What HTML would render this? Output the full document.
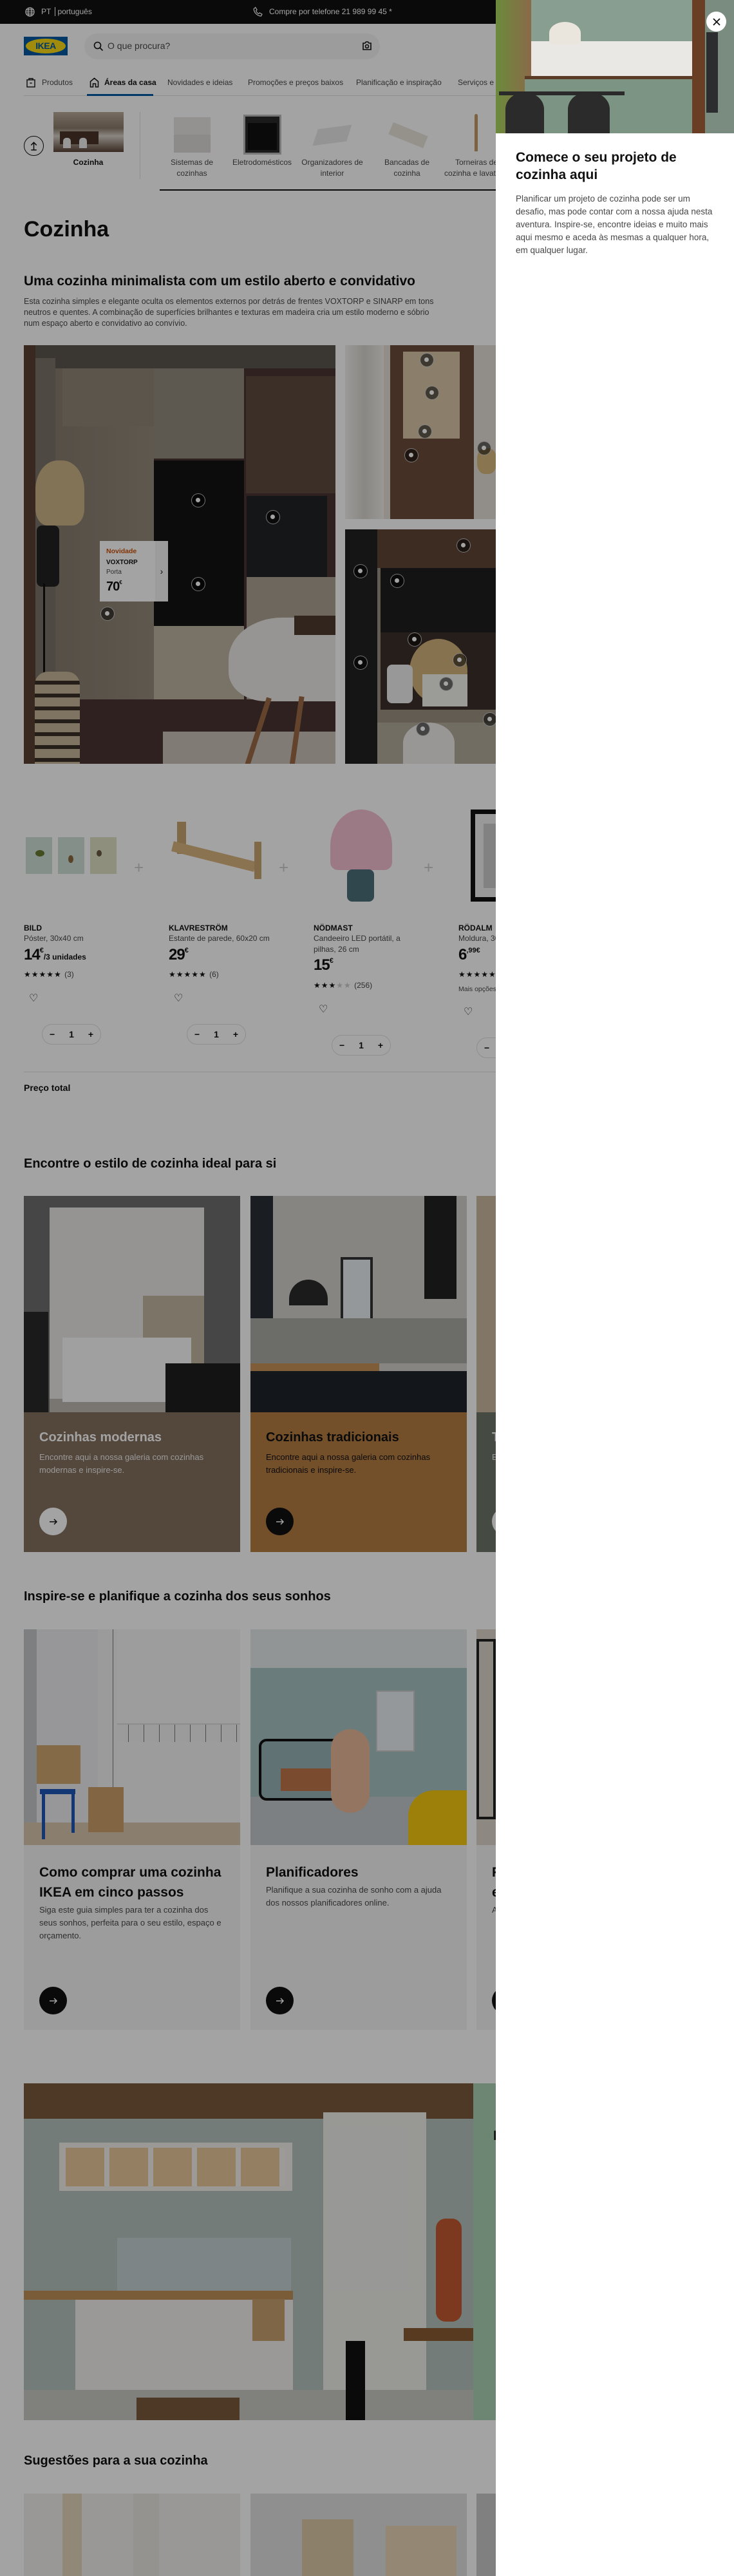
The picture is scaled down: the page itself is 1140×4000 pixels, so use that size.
<!DOCTYPE html>
<html><head><meta charset="utf-8">
<style>
*{margin:0;padding:0;box-sizing:border-box}
body{width:1140px;height:4000px;overflow:hidden;background:#fff;font-family:"Liberation Sans",sans-serif;color:#111;position:relative}
.a{position:absolute}
.nav{position:absolute;top:121px;font-size:12px;color:#484848;white-space:nowrap}
.cat{position:absolute;top:244px;width:110px;text-align:center;font-size:12px;line-height:17px;color:#484848}
.hs{position:absolute;width:22px;height:22px;margin:-11px 0 0 -11px;border-radius:50%;background:rgba(0,0,0,.55);border:1.5px solid rgba(255,255,255,.7)}
.hs:after{content:"";position:absolute;left:6px;top:6px;width:7px;height:7px;border-radius:50%;background:#fff}
.pn{position:absolute;font-size:12px;font-weight:bold;color:#111}
.pd{position:absolute;font-size:12px;color:#484848;line-height:17px;width:190px}
.pr{position:absolute;font-size:24px;font-weight:bold;letter-spacing:-1px}
.pr sup{font-size:11px;vertical-align:top;line-height:14px;letter-spacing:0}
.st{position:absolute;font-size:12px;color:#111;letter-spacing:1px}
.ht{position:absolute;font-size:16px}
.qty{position:absolute;width:92px;height:32px;border:1.5px solid #dfdfdf;border-radius:16px;font-size:14px;display:flex;justify-content:space-around;align-items:center;font-weight:bold}
.plus{position:absolute;font-size:26px;color:#ccc;top:1332px}
.h2{position:absolute;left:37px;font-size:20px;font-weight:bold}
.card{position:absolute;width:336px;overflow:hidden}
.btn{position:absolute;width:43px;height:43px;border-radius:50%;display:flex;align-items:center;justify-content:center}
</style></head><body>

<!-- top bar -->
<div class="a" style="left:0;top:0;width:1140px;height:37px;background:#111"></div>
<svg class="a" style="left:39px;top:11px" width="15" height="15" viewBox="0 0 16 16" fill="none" stroke="#fff" stroke-width="1.3"><circle cx="8" cy="8" r="7"/><ellipse cx="8" cy="8" rx="3" ry="7"/><path d="M1 8h14M2 4.5h12M2 11.5h12"/></svg>
<div class="a" style="left:64px;top:11px;font-size:12px;color:#fff">PT <span style="border-left:1px solid #fff;margin:0 3px"></span> português</div>
<svg class="a" style="left:393px;top:10px" width="15" height="17" viewBox="0 0 16 18" fill="none" stroke="#fff" stroke-width="1.3"><path d="M4 1.5l2.5 4-1.6 1.6c.8 2.2 2.4 4 4.4 5l1.6-1.6 4 2.4-1.6 3c-6 0-12-6-12-12z"/></svg>
<div class="a" style="left:418px;top:11px;font-size:12px;color:#fff">Compre por telefone 21 989 99 45 *</div>

<!-- header -->
<div class="a" style="left:37px;top:57px;width:68px;height:29px;background:#0058a3"><div class="a" style="left:3px;top:3px;width:62px;height:23px;border-radius:50%;background:#fbd914;text-align:center;font-weight:bold;font-size:14px;line-height:23px;color:#0058a3;letter-spacing:-.5px">IKEA</div></div>
<div class="a" style="left:131px;top:52px;width:459px;height:40px;border-radius:20px;background:#f5f5f5"></div>
<svg class="a" style="left:145px;top:64px" width="16" height="16" viewBox="0 0 16 16" fill="none" stroke="#111" stroke-width="1.6"><circle cx="6.5" cy="6.5" r="5"/><path d="M10 10l4.5 4.5"/></svg>
<div class="a" style="left:167px;top:63px;font-size:14px;color:#484848">O que procura?</div>
<svg class="a" style="left:562px;top:63px" width="16" height="16" viewBox="0 0 16 16" fill="none" stroke="#111" stroke-width="1.6"><path d="M2 4h3l1.5-2h3L11 4h3v10H2z"/><circle cx="8" cy="9" r="2.5"/></svg>

<svg class="a" style="left:41px;top:121px" width="14" height="15" viewBox="0 0 14 15" fill="none" stroke="#111" stroke-width="1.4"><rect x="1" y="3" width="12" height="11"/><path d="M4 3V1h6v2M5.5 8h3"/></svg>
<div class="nav" style="left:65px">Produtos</div>
<svg class="a" style="left:139px;top:120px" width="15" height="16" viewBox="0 0 15 16" fill="none" stroke="#111" stroke-width="1.5"><path d="M1.5 15V6.5L7.5 1.5l6 5V15h-4v-5h-4v5z"/></svg>
<div class="nav" style="left:162px;font-weight:bold;color:#111">Áreas da casa</div>
<div class="nav" style="left:260px">Novidades e ideias</div>
<div class="nav" style="left:385px">Promoções e preços baixos</div>
<div class="nav" style="left:553px">Planificação e inspiração</div>
<div class="nav" style="left:711px">Serviços e apoio</div>
<div class="a" style="left:37px;top:148px;width:1103px;height:1px;background:#dfdfdf"></div>
<div class="a" style="left:135px;top:146px;width:103px;height:3px;background:#0058a3"></div>

<!-- category row -->
<div class="a" style="left:37px;top:211px;width:31px;height:31px;border-radius:50%;border:1.5px solid #111"></div>
<svg class="a" style="left:44px;top:218px" width="17" height="17" viewBox="0 0 16 16" fill="none" stroke="#111" stroke-width="1.4"><path d="M8 14V3M4 7l4-4 4 4M4 14h8"/></svg>
<div class="a" style="left:83px;top:174px;width:109px;height:62px;background:linear-gradient(180deg,#b9aa99 0,#8b7b6a 40%,#d8d2ca 60%,#5a4436 100%)"><div class="a" style="left:10px;top:30px;width:60px;height:20px;background:#4a3428"></div><div class="a" style="left:15px;top:40px;width:12px;height:16px;background:#eee;border-radius:5px 5px 0 0"></div><div class="a" style="left:40px;top:40px;width:12px;height:16px;background:#eee;border-radius:5px 5px 0 0"></div></div>
<div class="cat" style="left:82px;top:244px;color:#111;font-weight:bold">Cozinha</div>
<div class="a" style="left:217px;top:174px;width:1px;height:104px;background:#dfdfdf"></div>
<div class="a" style="left:270px;top:182px;width:57px;height:55px;background:#e6e4e1"><div class="a" style="left:0;top:27px;width:57px;height:28px;background:#dddad6"></div></div>
<div class="cat" style="left:243px">Sistemas de cozinhas</div>
<div class="a" style="left:378px;top:178px;width:59px;height:62px;background:#2a2a2a;border:3px solid #bbb"><div class="a" style="left:4px;top:10px;width:45px;height:42px;background:#111"></div></div>
<div class="cat" style="left:352px">Eletrodomésticos</div>
<div class="a" style="left:491px;top:197px;width:50px;height:26px;background:#e8e8e8;transform:skewX(-25deg) rotate(-8deg)"></div>
<div class="cat" style="left:461px">Organizadores de interior</div>
<div class="a" style="left:605px;top:200px;width:58px;height:20px;background:#e9e4dc;transform:rotate(22deg)"></div>
<div class="cat" style="left:577px">Bancadas de cozinha</div>
<div class="a" style="left:737px;top:177px;width:5px;height:58px;background:#c49a66;border-radius:4px 4px 0 0"></div>
<div class="cat" style="left:685px">Torneiras de cozinha e lavatório</div>
<div class="a" style="left:248px;top:294px;width:900px;height:2px;background:#111"></div>

<div class="a" style="left:37px;top:337px;font-size:34px;font-weight:bold">Cozinha</div>

<!-- Section 1 -->
<div class="h2" style="top:425px;font-size:21px">Uma cozinha minimalista com um estilo aberto e convidativo</div>
<div class="a" style="left:37px;top:460px;width:650px;font-size:12.5px;line-height:17px;color:#484848">Esta cozinha simples e elegante oculta os elementos externos por detrás de frentes VOXTORP e SINARP em tons neutros e quentes. A combinação de superfícies brilhantes e texturas em madeira cria um estilo moderno e sóbrio num espaço aberto e convidativo ao convívio.</div>

<div class="a" style="left:37px;top:536px;width:484px;height:650px;overflow:hidden;background:#483532">
 <div class="a" style="left:0;top:0;width:484px;height:36px;background:#5b5651"></div>
 <div class="a" style="left:0;top:0;width:18px;height:650px;background:#5a3f33"></div>
 <div class="a" style="left:18px;top:20px;width:31px;height:630px;background:#7b7268"></div>
 <div class="a" style="left:49px;top:36px;width:153px;height:514px;background:linear-gradient(90deg,#877c6f,#958a7b)"></div>
 <div class="a" style="left:60px;top:36px;width:142px;height:90px;background:#8f8577"></div>
 <div class="a" style="left:202px;top:36px;width:140px;height:140px;background:#948b7d"></div>
 <div class="a" style="left:202px;top:179px;width:140px;height:257px;background:#141415"></div>
 <div class="a" style="left:202px;top:436px;width:140px;height:114px;background:#bdb2a0"></div>
 <div class="a" style="left:345px;top:48px;width:139px;height:182px;background:#5f4a3e"></div>
 <div class="a" style="left:346px;top:234px;width:125px;height:126px;background:#222327"></div>
 <div class="a" style="left:346px;top:360px;width:138px;height:190px;background:#aca193"></div>
 <div class="a" style="left:60px;top:550px;width:424px;height:100px;background:#483532"></div>
 <div class="a" style="left:216px;top:600px;width:268px;height:50px;background:#c9c1b6"></div>
 <div class="a" style="left:18px;top:179px;width:76px;height:101px;border-radius:45% 45% 25% 25%;background:#cbb588"></div>
 <div class="a" style="left:20px;top:280px;width:35px;height:95px;background:#222;border-radius:8px"></div>
 <div class="a" style="left:30px;top:370px;width:3px;height:280px;background:#111"></div>
 <div class="a" style="left:17px;top:507px;width:70px;height:143px;border-radius:20px 20px 0 0;background:repeating-linear-gradient(180deg,#c7b598 0 14px,#3b2e26 14px 20px)"></div>
 <div class="a" style="left:318px;top:423px;width:166px;height:130px;border-radius:50% 0 0 35%;background:#eceae7"></div>
 <div class="a" style="left:360px;top:545px;width:8px;height:110px;background:#9b6a44;transform:rotate(18deg)"></div>
 <div class="a" style="left:420px;top:545px;width:8px;height:110px;background:#9b6a44;transform:rotate(8deg)"></div>
 <div class="a" style="left:420px;top:420px;width:64px;height:30px;background:#4d3a30"></div>
</div>
<div class="a" style="left:536px;top:536px;width:240px;height:270px;overflow:hidden;background:#e3dfd8">
 <div class="a" style="left:0;top:0;width:60px;height:270px;background:linear-gradient(90deg,#f2f0ed,#d8d4ce,#f0eeea)"></div>
 <div class="a" style="left:70px;top:0;width:130px;height:270px;background:#6b4c3a"></div>
 <div class="a" style="left:90px;top:10px;width:88px;height:135px;background:#d9c7a8"></div>
 <div class="a" style="left:205px;top:160px;width:30px;height:40px;border-radius:40%;background:#d7b77d"></div>
</div>
<div class="a" style="left:536px;top:822px;width:240px;height:364px;overflow:hidden;background:#9a9183">
 <div class="a" style="left:0;top:0;width:50px;height:364px;background:#222"></div>
 <div class="a" style="left:50px;top:0;width:190px;height:60px;background:#5e4636"></div>
 <div class="a" style="left:55px;top:60px;width:180px;height:100px;background:#1e1e20"></div>
 <div class="a" style="left:55px;top:160px;width:180px;height:120px;background:#3b3029"></div>
 <div class="a" style="left:100px;top:170px;width:90px;height:100px;border-radius:50%;background:#d4b37c"></div>
 <div class="a" style="left:65px;top:210px;width:40px;height:60px;border-radius:8px;background:#eee"></div>
 <div class="a" style="left:120px;top:225px;width:70px;height:50px;background:#f2f2ee"></div>
 <div class="a" style="left:50px;top:300px;width:190px;height:64px;background:#b3ab9c"></div>
 <div class="a" style="left:90px;top:300px;width:80px;height:64px;border-radius:50% 50% 0 0;background:#eeecea"></div>
</div>

<div class="hs" style="left:308px;top:777px"></div><div class="hs" style="left:424px;top:803px"></div>
<div class="hs" style="left:308px;top:907px"></div><div class="hs" style="left:167px;top:953px"></div>
<div class="hs" style="left:663px;top:559px"></div><div class="hs" style="left:671px;top:610px"></div>
<div class="hs" style="left:660px;top:670px"></div><div class="hs" style="left:639px;top:707px"></div>
<div class="hs" style="left:752px;top:696px"></div><div class="hs" style="left:720px;top:847px"></div>
<div class="hs" style="left:560px;top:887px"></div><div class="hs" style="left:617px;top:902px"></div>
<div class="hs" style="left:560px;top:1029px"></div><div class="hs" style="left:644px;top:993px"></div>
<div class="hs" style="left:714px;top:1025px"></div><div class="hs" style="left:693px;top:1062px"></div>
<div class="hs" style="left:657px;top:1132px"></div><div class="hs" style="left:761px;top:1117px"></div>

<div class="a" style="left:155px;top:840px;width:106px;height:94px;background:#fff">
 <div class="a" style="left:10px;top:10px;font-size:10.5px;font-weight:bold;color:#ca5008">Novidade</div>
 <div class="a" style="left:10px;top:28px;font-size:10px;font-weight:bold">VOXTORP</div>
 <div class="a" style="left:10px;top:43px;font-size:10px;color:#484848">Porta</div>
 <div class="a" style="left:10px;top:60px;font-size:20px;font-weight:bold;letter-spacing:-1px">70<sup style="font-size:8px;vertical-align:top">€</sup></div>
 <div class="a" style="left:86px;top:0;width:20px;height:94px;background:#f5f5f5;font-size:14px;line-height:94px;text-align:center">›</div>
</div>

<!-- products -->
<div class="a" style="left:40px;top:1300px;width:41px;height:57px;background:#cfe0d6"></div>
<div class="a" style="left:90px;top:1300px;width:41px;height:57px;background:#cfe0d6"></div>
<div class="a" style="left:140px;top:1300px;width:41px;height:57px;background:#dfe0c4"></div>
<div class="a" style="left:55px;top:1320px;width:14px;height:10px;border-radius:50%;background:#6a7a30"></div>
<div class="a" style="left:106px;top:1328px;width:8px;height:12px;border-radius:50%;background:#8a6a40"></div>
<div class="a" style="left:150px;top:1320px;width:8px;height:10px;border-radius:50%;background:#6a5a40"></div>
<div class="plus" style="left:208px">+</div>
<div class="a" style="left:275px;top:1276px;width:14px;height:50px;background:#c9a56f"></div>
<div class="a" style="left:266px;top:1322px;width:132px;height:16px;background:#d6b47f;transform:rotate(14deg)"></div>
<div class="a" style="left:395px;top:1307px;width:11px;height:58px;background:#c9a56f"></div>
<div class="plus" style="left:433px">+</div>
<div class="a" style="left:513px;top:1257px;width:96px;height:94px;border-radius:50% 50% 12px 12px/60% 60% 12px 12px;background:#f2bfd2"></div>
<div class="a" style="left:553px;top:1350px;width:10px;height:30px;background:#c88f3a"></div>
<div class="a" style="left:539px;top:1350px;width:42px;height:50px;border-radius:8px;background:#4e6f7a"></div>
<div class="plus" style="left:658px">+</div>
<div class="a" style="left:731px;top:1257px;width:60px;height:143px;border:7px solid #111;background:#f0f0f0"><div class="a" style="left:13px;top:15px;width:40px;height:100px;background:#ccc"></div></div>

<div class="pn" style="left:37px;top:1434px">BILD</div>
<div class="pd" style="left:37px;top:1449px">Póster, 30x40 cm</div>
<div class="pr" style="left:37px;top:1469px">14<sup>€</sup><span style="font-size:12px;letter-spacing:0">/3 unidades</span></div>
<div class="st" style="left:37px;top:1506px">★★★★★ <span style="color:#484848;letter-spacing:0">(3)</span></div>
<div class="ht" style="left:45px;top:1540px">♡</div>
<div class="qty" style="left:65px;top:1590px"><span>−</span><span>1</span><span>+</span></div>

<div class="pn" style="left:262px;top:1434px">KLAVRESTRÖM</div>
<div class="pd" style="left:262px;top:1449px">Estante de parede, 60x20 cm</div>
<div class="pr" style="left:262px;top:1469px">29<sup>€</sup></div>
<div class="st" style="left:262px;top:1506px">★★★★★ <span style="color:#484848;letter-spacing:0">(6)</span></div>
<div class="ht" style="left:270px;top:1540px">♡</div>
<div class="qty" style="left:290px;top:1590px"><span>−</span><span>1</span><span>+</span></div>

<div class="pn" style="left:487px;top:1434px">NÖDMAST</div>
<div class="pd" style="left:487px;top:1449px;width:150px">Candeeiro LED portátil, a pilhas, 26 cm</div>
<div class="pr" style="left:487px;top:1485px">15<sup>€</sup></div>
<div class="st" style="left:487px;top:1523px">★★★<span style="color:#ccc">★★</span> <span style="color:#484848;letter-spacing:0">(256)</span></div>
<div class="ht" style="left:495px;top:1557px">♡</div>
<div class="qty" style="left:515px;top:1607px"><span>−</span><span>1</span><span>+</span></div>

<div class="pn" style="left:712px;top:1434px">RÖDALM</div>
<div class="pd" style="left:712px;top:1449px">Moldura, 30x40 cm</div>
<div class="pr" style="left:712px;top:1469px">6<sup>,99€</sup></div>
<div class="st" style="left:712px;top:1506px">★★★★★</div>
<div class="a" style="left:712px;top:1530px;font-size:10.5px;color:#484848">Mais opções</div>
<div class="ht" style="left:720px;top:1561px">♡</div>
<div class="qty" style="left:740px;top:1611px"><span>−</span><span>1</span><span>+</span></div>

<div class="a" style="left:37px;top:1664px;width:1103px;height:1px;background:#dfdfdf"></div>
<div class="a" style="left:37px;top:1681px;font-size:14px;font-weight:bold">Preço total</div>

<!-- style cards -->
<div class="h2" style="top:1796px">Encontre o estilo de cozinha ideal para si</div>
<div class="card" style="left:37px;top:1857px;height:553px;background:#84705f">
 <div class="a" style="left:0;top:0;width:336px;height:336px;background:#6e6e6e">
  <div class="a" style="left:40px;top:18px;width:240px;height:318px;background:#e9e8e6"></div>
  <div class="a" style="left:185px;top:155px;width:95px;height:105px;background:#c3b8a2"></div>
  <div class="a" style="left:40px;top:315px;width:260px;height:21px;background:#bdb9b2"></div>
  <div class="a" style="left:60px;top:220px;width:200px;height:100px;background:#fafafa"></div>
  <div class="a" style="left:0;top:180px;width:38px;height:156px;background:#2a2a2a"></div>
  <div class="a" style="left:220px;top:260px;width:116px;height:76px;background:#1e1e1e"></div>
 </div>
 <div class="a" style="left:24px;top:364px;font-size:20px;font-weight:bold;color:#fff">Cozinhas modernas</div>
 <div class="a" style="left:24px;top:396px;width:270px;font-size:13px;line-height:20px;color:#eee">Encontre aqui a nossa galeria com cozinhas modernas e inspire-se.</div>
 <div class="btn" style="left:24px;top:484px;background:#fff"><svg width="14" height="14" viewBox="0 0 14 14" fill="none" stroke="#111" stroke-width="1.5"><path d="M1 7h11M8 3l4 4-4 4"/></svg></div>
</div>
<div class="card" style="left:389px;top:1857px;height:553px;background:#b47c42">
 <div class="a" style="left:0;top:0;width:336px;height:336px;background:#d4d0cb">
  <div class="a" style="left:0;top:0;width:35px;height:336px;background:#2a2e34"></div>
  <div class="a" style="left:140px;top:95px;width:50px;height:110px;background:#e8eef2;border:4px solid #333"></div>
  <div class="a" style="left:60px;top:130px;width:60px;height:40px;background:#2b2b2b;border-radius:30px 30px 0 0"></div>
  <div class="a" style="left:0;top:190px;width:336px;height:70px;background:#a9aaa3"></div>
  <div class="a" style="left:0;top:260px;width:200px;height:12px;background:#c8925a"></div>
  <div class="a" style="left:0;top:272px;width:336px;height:64px;background:#1f242c"></div>
  <div class="a" style="left:270px;top:0;width:50px;height:160px;background:#222"></div>
 </div>
 <div class="a" style="left:24px;top:364px;font-size:20px;font-weight:bold;color:#111">Cozinhas tradicionais</div>
 <div class="a" style="left:24px;top:396px;width:270px;font-size:13px;line-height:20px;color:#111">Encontre aqui a nossa galeria com cozinhas tradicionais e inspire-se.</div>
 <div class="btn" style="left:24px;top:484px;background:#111"><svg width="14" height="14" viewBox="0 0 14 14" fill="none" stroke="#fff" stroke-width="1.5"><path d="M1 7h11M8 3l4 4-4 4"/></svg></div>
</div>
<div class="card" style="left:740px;top:1857px;height:553px;background:#6c746a">
 <div class="a" style="left:0;top:0;width:336px;height:336px;background:#cbb9a0"></div>
 <div class="a" style="left:24px;top:364px;font-size:20px;font-weight:bold;color:#fff">Tendências</div>
 <div class="a" style="left:24px;top:396px;width:270px;font-size:13px;line-height:20px;color:#eee">Encontre aqui cozinhas</div>
 <div class="btn" style="left:24px;top:484px;background:#fff"></div>
</div>

<!-- inspire -->
<div class="h2" style="top:2468px">Inspire-se e planifique a cozinha dos seus sonhos</div>
<div class="card" style="left:37px;top:2530px;height:622px;background:#f5f5f5">
 <div class="a" style="left:0;top:0;width:336px;height:335px;background:#ecedef">
  <div class="a" style="left:0;top:0;width:20px;height:335px;background:#c5c7ca"></div>
  <div class="a" style="left:115px;top:0;width:221px;height:260px;background:repeating-linear-gradient(90deg,#f2f3f4 0 23px,#777 23px 24px),#fff"></div>
  <div class="a" style="left:145px;top:0;width:191px;height:148px;background:#f6f6f6;border-bottom:2px solid #ddd"></div>
  <div class="a" style="left:145px;top:175px;width:191px;height:125px;background:#f4f4f4"></div>
  <div class="a" style="left:0;top:300px;width:336px;height:35px;background:#d8c7ae"></div>
  <div class="a" style="left:20px;top:180px;width:68px;height:60px;background:#d0a66f"></div>
  <div class="a" style="left:100px;top:245px;width:55px;height:70px;background:#cca06a"></div>
  <div class="a" style="left:25px;top:248px;width:55px;height:8px;background:#1f57b8"></div>
  <div class="a" style="left:28px;top:256px;width:5px;height:70px;background:#1f57b8"></div>
  <div class="a" style="left:74px;top:256px;width:5px;height:60px;background:#1f57b8"></div>
 </div>
 <div class="a" style="left:24px;top:362px;width:290px;font-size:21px;line-height:31px;font-weight:bold">Como comprar uma cozinha IKEA em cinco passos</div>
 <div class="a" style="left:24px;top:426px;width:290px;font-size:13px;line-height:20px;color:#484848">Siga este guia simples para ter a cozinha dos seus sonhos, perfeita para o seu estilo, espaço e orçamento.</div>
 <div class="btn" style="left:24px;top:555px;background:#111"><svg width="14" height="14" viewBox="0 0 14 14" fill="none" stroke="#fff" stroke-width="1.5"><path d="M1 7h11M8 3l4 4-4 4"/></svg></div>
</div>
<div class="card" style="left:389px;top:2530px;height:622px;background:#f5f5f5">
 <div class="a" style="left:0;top:0;width:336px;height:335px;background:#a8c3c4">
  <div class="a" style="left:0;top:0;width:336px;height:60px;background:#e3eaea"></div>
  <div class="a" style="left:195px;top:95px;width:60px;height:95px;background:#e8eef2;border:2px solid #ccc"></div>
  <div class="a" style="left:0;top:260px;width:336px;height:75px;background:#c2c8cc"></div>
  <div class="a" style="left:13px;top:170px;width:135px;height:96px;border-radius:12px;border:4px solid #111;background:#97b3b6"><div class="a" style="left:30px;top:42px;width:80px;height:35px;background:#c0764a"></div></div>
  <div class="a" style="left:125px;top:155px;width:60px;height:130px;border-radius:30px;background:#e7b898"></div>
  <div class="a" style="left:245px;top:250px;width:91px;height:85px;background:#f5c90f;border-radius:40px 0 0 0"></div>
 </div>
 <div class="a" style="left:24px;top:362px;width:290px;font-size:21px;line-height:31px;font-weight:bold">Planificadores</div>
 <div class="a" style="left:24px;top:395px;width:290px;font-size:13px;line-height:20px;color:#484848">Planifique a sua cozinha de sonho com a ajuda dos nossos planificadores online.</div>
 <div class="btn" style="left:24px;top:555px;background:#111"><svg width="14" height="14" viewBox="0 0 14 14" fill="none" stroke="#fff" stroke-width="1.5"><path d="M1 7h11M8 3l4 4-4 4"/></svg></div>
</div>
<div class="card" style="left:740px;top:2530px;height:622px;background:#f5f5f5">
 <div class="a" style="left:0;top:0;width:336px;height:335px;background:#ddd6cc"><div class="a" style="left:0;top:15px;width:30px;height:280px;border:4px solid #222"></div></div>
 <div class="a" style="left:24px;top:362px;width:290px;font-size:21px;line-height:31px;font-weight:bold">Fale com os nossos especialistas</div>
 <div class="a" style="left:24px;top:426px;width:290px;font-size:13px;line-height:20px;color:#484848">A s u d</div>
 <div class="btn" style="left:24px;top:555px;background:#111"></div>
</div>

<!-- big image -->
<div class="a" style="left:37px;top:3235px;width:698px;height:523px;overflow:hidden;background:#b4c3bd">
 <div class="a" style="left:0;top:0;width:698px;height:55px;background:#7a5a3e"></div>
 <div class="a" style="left:55px;top:92px;width:362px;height:75px;background:#f1efe9"></div>
 <div class="a" style="left:65px;top:100px;width:340px;height:60px;background:repeating-linear-gradient(90deg,#e9c79c 0 60px,#f4f2ee 60px 68px)"></div>
 <div class="a" style="left:465px;top:45px;width:160px;height:478px;background:#eeeeea"></div>
 <div class="a" style="left:145px;top:240px;width:270px;height:82px;background:#c4d1d3"></div>
 <div class="a" style="left:0;top:322px;width:418px;height:14px;background:#c0915a"></div>
 <div class="a" style="left:80px;top:336px;width:338px;height:140px;background:#f1f0ec"></div>
 <div class="a" style="left:0;top:476px;width:698px;height:47px;background:#c8c8c4"></div>
 <div class="a" style="left:175px;top:488px;width:160px;height:35px;background:#7b5a3c"></div>
 <div class="a" style="left:355px;top:335px;width:50px;height:65px;background:#c6a06e"></div>
 <div class="a" style="left:590px;top:380px;width:108px;height:20px;background:#8a5b33"></div>
 <div class="a" style="left:640px;top:210px;width:40px;height:160px;background:#c25a32;border-radius:15px"></div>
 <div class="a" style="left:500px;top:400px;width:30px;height:123px;background:#111"></div>
</div>
<div class="a" style="left:735px;top:3235px;width:405px;height:523px;background:#aad2b5"></div>
<div class="a" style="left:766px;top:3305px;font-size:21px;font-weight:bold">K</div>

<div class="h2" style="top:3810px">Sugestões para a sua cozinha</div>
<div class="a" style="left:37px;top:3872px;width:336px;height:128px;background:#f0eeeb"><div class="a" style="left:60px;top:0;width:30px;height:128px;background:#e3d5bc"></div><div class="a" style="left:170px;top:0;width:40px;height:128px;background:#e9e6e1"></div></div>
<div class="a" style="left:389px;top:3872px;width:336px;height:128px;background:#dfe0de"><div class="a" style="left:210px;top:50px;width:110px;height:78px;background:#e8d3b5"></div><div class="a" style="left:80px;top:40px;width:80px;height:88px;background:#dcc8a8"></div></div>
<div class="a" style="left:740px;top:3872px;width:400px;height:128px;background:#c8c8c8"></div>

<!-- overlay -->
<div class="a" style="left:0;top:0;width:1140px;height:4000px;background:rgba(0,0,0,.36);z-index:50"></div>

<!-- panel -->
<div class="a" style="left:770px;top:0;width:370px;height:4000px;background:#fff;z-index:60">
 <div class="a" style="left:0;top:0;width:370px;height:207px;overflow:hidden;background:#7f9688">
  <div class="a" style="left:0;top:0;width:55px;height:207px;background:linear-gradient(90deg,#6b8a3c,#8a6a48)"></div>
  <div class="a" style="left:55px;top:0;width:250px;height:65px;background:#889e90"></div>
  <div class="a" style="left:55px;top:64px;width:250px;height:54px;background:#e9e8e4"></div>
  <div class="a" style="left:45px;top:118px;width:260px;height:5px;background:#5b3a26"></div>
  <div class="a" style="left:45px;top:123px;width:260px;height:84px;background:#7c9484"></div>
  <div class="a" style="left:305px;top:0;width:20px;height:207px;background:#6a3e24"></div>
  <div class="a" style="left:325px;top:0;width:45px;height:207px;background:#7a8c80"></div>
  <div class="a" style="left:327px;top:50px;width:18px;height:125px;background:#2c2d2f"></div>
  <div class="a" style="left:83px;top:34px;width:49px;height:35px;border-radius:50% 50% 6px 6px;background:#ebe6dd"></div>
  <div class="a" style="left:5px;top:142px;width:195px;height:6px;background:#2a2a2a"></div>
  <div class="a" style="left:15px;top:145px;width:60px;height:62px;border-radius:25px 25px 0 0;background:#2b2b2b"></div>
  <div class="a" style="left:112px;top:145px;width:65px;height:62px;border-radius:25px 25px 0 0;background:#2b2b2b"></div>
 </div>
 <div class="a" style="left:327px;top:18px;width:31px;height:31px;border-radius:50%;background:#fff;display:flex;align-items:center;justify-content:center"><svg width="12" height="12" viewBox="0 0 12 12" stroke="#111" stroke-width="1.8"><path d="M1 1l10 10M11 1L1 11"/></svg></div>
 <div class="a" style="left:31px;top:231px;width:320px;font-size:21px;line-height:27px;font-weight:bold">Comece o seu projeto de cozinha aqui</div>
 <div class="a" style="left:31px;top:299px;width:320px;font-size:13.5px;line-height:20px;color:#484848">Planificar um projeto de cozinha pode ser um desafio, mas pode contar com a nossa ajuda nesta aventura. Inspire-se, encontre ideias e muito mais aqui mesmo e aceda às mesmas a qualquer hora, em qualquer lugar.</div>
</div>
</body></html>
